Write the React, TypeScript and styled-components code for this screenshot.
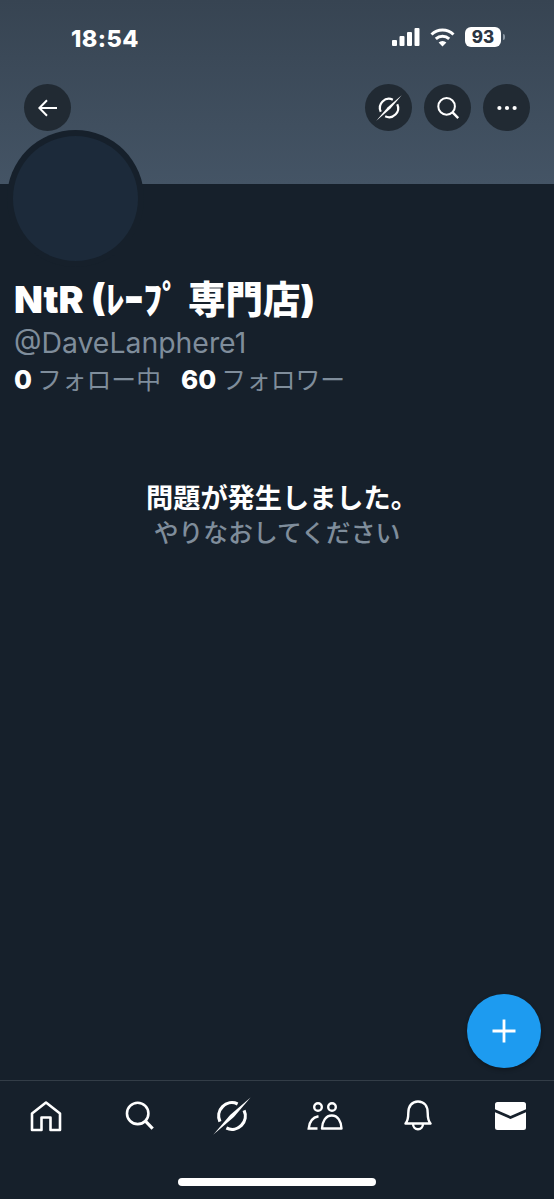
import React from "react";
import styled, { createGlobalStyle } from "styled-components";

const CJK = `Inter, "Noto Sans CJK JP", "Noto Sans", sans-serif`;

const GlobalStyle = createGlobalStyle`
  html, body {
    margin: 0;
    padding: 0;
    background: #16202b;
  }
  * {
    box-sizing: border-box;
  }
`;

function GrokIcon({ size, stroke }: { size: number; stroke: number }) {
  return (
    <svg width={size} height={size} viewBox="0 0 40 40" fill="none">
      <path
        d="M25.900 7.300A14 14 0 0 0 7.300 25.900M32.700 14.100A14 14 0 0 1 14.100 32.700"
        stroke="#fff"
        strokeWidth={stroke}
      />
      <path d="M39.500.5 22 21 .5 39.500 18 19Z" fill="#fff" />
    </svg>
  );
}

function SearchIcon({ size }: { size: number }) {
  return (
    <svg width={size} height={size} viewBox="0 0 24 24" fill="none">
      <circle cx="10.600" cy="10.400" r="8.300" stroke="#fff" strokeWidth="2" />
      <path d="m16.600 16.400 5.600 5.800" stroke="#fff" strokeWidth="2.400" />
    </svg>
  );
}

function SignalIcon() {
  return (
    <svg width="28" height="18" viewBox="0 0 28 18" fill="#fff">
      <rect x="0" y="12" width="5" height="6" rx="1" />
      <rect x="7.500" y="8" width="5" height="10" rx="1" />
      <rect x="15" y="4" width="5" height="14" rx="1" />
      <rect x="22.500" y="0" width="5" height="18" rx="1" />
    </svg>
  );
}

function WifiIcon() {
  return (
    <svg width="25" height="19" viewBox="0 0 25 19" fill="none" stroke="#fff">
      <path d="M1.500 6.500a16 16 0 0 1 22 0" strokeWidth="3" />
      <path d="M5.800 10.800a10 10 0 0 1 13.400 0" strokeWidth="3" />
      <path d="M12.500 18.500 8.600 14.600a5.600 5.600 0 0 1 7.800 0Z" fill="#fff" stroke="none" />
    </svg>
  );
}

export default function App() {
  return (
    <>
      <GlobalStyle />
      <Screen>
        <Banner>
          <StatusBar>
            <Time>18:54</Time>
            <StatusIcons>
              <SignalIcon />
              <WifiIcon />
              <Battery>
                <BatteryLevel>93</BatteryLevel>
              </Battery>
            </StatusIcons>
          </StatusBar>
          <TopActions>
            <RoundButton>
              <svg width="24" height="24" viewBox="0 0 24 24" fill="none">
                <path
                  d="M21 12H3.600M11 4.200 3.400 12l7.600 7.800"
                  stroke="#fff"
                  strokeWidth="2"
                />
              </svg>
            </RoundButton>
            <ActionGroup>
              <RoundButton>
                <GrokIcon size={26} stroke={3.4} />
              </RoundButton>
              <RoundButton>
                <SearchIcon size={24} />
              </RoundButton>
              <RoundButton>
                <svg width="24" height="24" viewBox="0 0 24 24" fill="#fff">
                  <circle cx="4.400" cy="12" r="2.100" />
                  <circle cx="12" cy="12" r="2.100" />
                  <circle cx="19.600" cy="12" r="2.100" />
                </svg>
              </RoundButton>
            </ActionGroup>
          </TopActions>
        </Banner>

        <AvatarRing>
          <Avatar />
        </AvatarRing>

        <Profile>
          <Name>NtR (ﾚｰﾌﾟ 専門店)</Name>
          <Handle>@DaveLanphere1</Handle>
          <Counts>
            <Count>
              <strong>0</strong> フォロー中
            </Count>
            <Count>
              <strong>60</strong> フォロワー
            </Count>
          </Counts>
        </Profile>

        <ErrorBlock>
          <ErrorTitle>問題が発生しました。</ErrorTitle>
          <RetryText>やりなおしてください</RetryText>
        </ErrorBlock>

        <Fab>
          <svg width="28" height="28" viewBox="0 0 28 28" fill="none">
            <path d="M14 2.500v23M2.500 14h23" stroke="#fff" strokeWidth="2.800" />
          </svg>
        </Fab>

        <TabBar>
          <Tab>
            <svg width="32" height="32" viewBox="0 0 32 32" fill="none">
              <path
                d="M2 13.500 16 2.500l14 11V30H20.500V17.500h-9V30H2Z"
                stroke="#fff"
                strokeWidth="2.600"
                strokeLinejoin="round"
              />
            </svg>
          </Tab>
          <Tab>
            <SearchIcon size={31} />
          </Tab>
          <Tab>
            <GrokIcon size={38} stroke={3.400} />
          </Tab>
          <Tab>
            <svg width="36" height="28" viewBox="0 0 36 28" fill="none" stroke="#fff" strokeWidth="2.400">
              <circle cx="11" cy="5" r="3.800" />
              <circle cx="25" cy="5" r="3.800" />
              <path d="M10.500 26.500H1.700c.5-6 3.800-11 9.800-12.200" />
              <path
                d="M15 26.500h19.500c-.3-7-3.500-13-9.700-13S15.300 19.500 15 26.500Z"
                strokeLinejoin="round"
              />
            </svg>
          </Tab>
          <Tab>
            <svg width="28" height="31" viewBox="0 0 28 31" fill="none" stroke="#fff" strokeWidth="2.400">
              <path
                d="M1.500 23.500c2.200-2.500 2.800-5 2.800-10.500 0-7 3.700-11.500 9.700-11.500S23.700 6 23.700 13c0 5.500.6 8 2.800 10.500Z"
                strokeLinejoin="round"
              />
              <path d="M9 23.500c0 3.500 2.200 5.800 5 5.800s5-2.300 5-5.800" />
            </svg>
          </Tab>
          <Tab>
            <svg width="31" height="28" viewBox="0 0 31 28" fill="#fff">
              <path d="M2.500 0h26A2.500 2.500 0 0 1 31 2.500v4.700L15.500 14 0 7.200V2.500A2.500 2.500 0 0 1 2.500 0Z" />
              <path d="M0 10.300 15.500 17 31 10.300v15.200a2.500 2.500 0 0 1-2.500 2.500h-26A2.500 2.500 0 0 1 0 25.500Z" />
            </svg>
          </Tab>
        </TabBar>
        <HomeBar>
          <HomeIndicator />
        </HomeBar>
      </Screen>
    </>
  );
}

const Screen = styled.div`
  position: relative;
  display: flex;
  flex-direction: column;
  width: 554px;
  height: 1199px;
  overflow: hidden;
  background: #16202b;
  color: #fff;
  font-family: ${CJK};
`;

const Banner = styled.header`
  height: 184px;
  padding: 27px 24px 0 24px;
  background: linear-gradient(#374452, #445465);
`;

const StatusBar = styled.div`
  display: flex;
  align-items: center;
  justify-content: space-between;
  height: 20px;
  padding: 0 24px 0 47px;
`;

const Time = styled.span`
  font-size: 23.500px;
  font-weight: 800;
  letter-spacing: 0.4px;
  padding-top: 2px;
`;

const StatusIcons = styled.div`
  display: flex;
  align-items: center;
  gap: 10px;
`;

const Battery = styled.div`
  position: relative;
  width: 36px;
  height: 20px;
  margin-right: 5px;
  border-radius: 6px;
  background: #fff;
  display: flex;
  align-items: center;
  justify-content: center;

  &:after {
    content: "";
    position: absolute;
    right: -4px;
    top: 7px;
    width: 2px;
    height: 6px;
    border-radius: 0 2px 2px 0;
    background: #8a96a3;
  }
`;

const BatteryLevel = styled.span`
  font-size: 17px;
  font-weight: 800;
  color: #2b3542;
`;

const TopActions = styled.div`
  display: flex;
  justify-content: space-between;
  margin-top: 37px;
`;

const ActionGroup = styled.div`
  display: flex;
  gap: 12px;
`;

const RoundButton = styled.button`
  display: flex;
  align-items: center;
  justify-content: center;
  width: 47px;
  height: 47px;
  padding: 0;
  border: 0;
  border-radius: 50%;
  background: #212a33;
`;

const AvatarRing = styled.div`
  display: flex;
  align-items: center;
  justify-content: center;
  width: 137px;
  height: 137px;
  margin: -54px 0 0 7px;
  border-radius: 50%;
  background: #16202b;
`;

const Avatar = styled.div`
  width: 125px;
  height: 125px;
  border-radius: 50%;
  background: #1c2a3a;
`;

const Profile = styled.section`
  padding: 10px 14px 0;
`;

const Name = styled.h1`
  margin: 0;
  font-size: 37.500px;
  line-height: 46px;
  font-weight: 900;
`;

const Handle = styled.div`
  font-size: 28.400px;
  line-height: 34px;
  margin-top: 3px;
  color: #7f8d9b;
`;

const Counts = styled.div`
  display: flex;
  gap: 20px;
  margin-top: 2px;
  font-size: 24.800px;
  line-height: 36px;
  color: #7f8d9b;

  strong {
    color: #fff;
    font-size: 26px;
    font-weight: 800;
    margin-right: -2px;
  }
`;

const Count = styled.span``;

const ErrorBlock = styled.section`
  display: flex;
  flex-direction: column;
  align-items: center;
  margin-top: 83px;
`;

const ErrorTitle = styled.div`
  margin-left: 10px;
  font-size: 27.200px;
  line-height: 36px;
  font-weight: 700;
`;

const RetryText = styled.div`
  font-size: 24.800px;
  line-height: 32px;
  font-weight: 500;
  color: #7f8d9b;
`;

const Fab = styled.button`
  position: absolute;
  left: 467px;
  top: 994px;
  display: flex;
  align-items: center;
  justify-content: center;
  width: 74px;
  height: 74px;
  padding: 0;
  border: 0;
  border-radius: 50%;
  background: #1d9bf0;
  box-shadow: 0 2px 4px rgba(0, 0, 0, 0.3);
`;

const TabBar = styled.nav`
  display: grid;
  grid-template-columns: repeat(6, 92.8px);
  height: 70px;
  margin-top: auto;
  border-top: 1px solid #333d47;
`;

const Tab = styled.div`
  display: flex;
  align-items: center;
  justify-content: center;
`;

const HomeBar = styled.div`
  display: flex;
  justify-content: center;
  height: 49px;
  padding-top: 28px;
`;

const HomeIndicator = styled.div`
  width: 198px;
  height: 8px;
  border-radius: 4px;
  background: #fff;
`;
